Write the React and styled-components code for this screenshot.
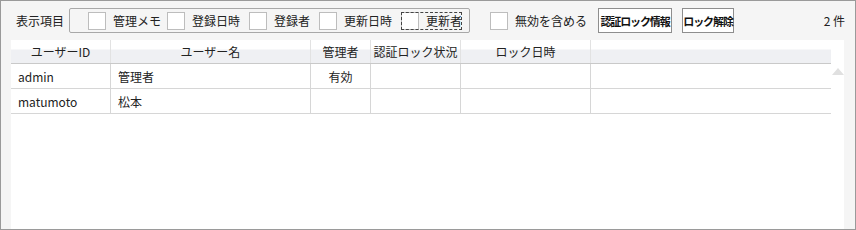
import React from "react";
import styled, { createGlobalStyle } from "styled-components";

const GlobalStyle = createGlobalStyle`
  html, body {
    margin: 0;
    padding: 0;
    background: #fff;
  }
  body {
    font-family: "Noto Sans CJK JP", "Noto Sans", sans-serif;
    font-size: 12px;
    color: #222;
  }
`;

const Frame = styled.div`
  width: 856px;
  height: 230px;
  box-sizing: border-box;
  border: 1px solid #9a9a9a;
  background: #f5f5f5;
  display: flex;
  flex-direction: column;
`;

const Toolbar = styled.div`
  height: 39px;
  display: flex;
  align-items: center;
  padding: 0 10px 0 15px;
  box-sizing: border-box;
  white-space: nowrap;
`;

const Caption = styled.span`
  margin-right: 5px;
  line-height: 16px;
`;

const GroupBox = styled.div`
  width: 401px;
  height: 25px;
  box-sizing: border-box;
  border: 1px solid #a8a8a8;
  border-radius: 2px;
  display: flex;
  align-items: center;
  padding-left: 18px;
  margin-right: 20px;
`;

const CheckItem = styled.label`
  display: flex;
  align-items: center;
  gap: 7px;
  width: ${(p) => (p.$width ? `${p.$width}px` : "auto")};
  height: 18px;
  padding-right: 1px;
  box-sizing: border-box;
  white-space: nowrap;
  outline: ${(p) => (p.$focused ? "1px dashed #444" : "none")};
  outline-offset: -1px;
  flex: none;
`;

const Box = styled.span`
  width: 18px;
  height: 18px;
  box-sizing: border-box;
  border: 1px solid #bdbdbd;
  background: #fff;
  flex: none;
`;

const Button = styled.button`
  width: ${(p) => p.$width}px;
  height: 25px;
  box-sizing: border-box;
  border: 1px solid #8e8e8e;
  background: #fff;
  font-family: "Noto Sans CJK JP", sans-serif;
  font-size: 11px;
  font-weight: bold;
  letter-spacing: -1.1px;
  color: #111;
  padding: 0;
  white-space: nowrap;
  margin-left: ${(p) => p.$gap}px;
  flex: none;
`;

const Count = styled.span`
  margin-left: auto;
`;

const Grid = styled.div`
  flex: 1;
  margin: 0 11px 0 10px;
  background: #fff;
  display: flex;
`;

const Table = styled.div`
  width: 820px;
  display: flex;
  flex-direction: column;
`;

const Row = styled.div`
  display: grid;
  grid-template-columns: 100px 200px 60px 90px 130px 1fr;
  height: ${(p) => (p.$head ? 24 : 25)}px;
  box-sizing: border-box;
  border-bottom: 1px solid ${(p) => (p.$head ? "#c9c9c9" : "#d6d6d6")};
  background: ${(p) =>
    p.$head ? "linear-gradient(#ffffff 0, #ffffff 9px, #eff0f3 10px, #eff0f3 100%)" : "#fff"};
`;

const Cell = styled.div`
  display: flex;
  align-items: center;
  justify-content: ${(p) => (p.$center ? "center" : "flex-start")};
  padding-left: ${(p) => (p.$center ? 0 : 7)}px;
  border-right: 1px solid ${(p) => (p.$head ? "#e2e2e2" : "#d6d6d6")};
  white-space: nowrap;
  &:last-child {
    border-right: none;
  }
`;

const ScrollBar = styled.div`
  flex: 1;
  display: flex;
  justify-content: center;
  padding-top: 28px;
`;

const columns = ["ユーザーID", "ユーザー名", "管理者", "認証ロック状況", "ロック日時", ""];

const rows = [
  { id: "admin", name: "管理者", admin: "有効" },
  { id: "matumoto", name: "松本", admin: "" },
];

const options = [
  { label: "管理メモ", width: 79 },
  { label: "登録日時", width: 82 },
  { label: "登録者", width: 70 },
  { label: "更新日時", width: 82 },
  { label: "更新者", width: 61, focused: true },
];

export default function App() {
  return (
    <>
      <GlobalStyle />
      <Frame>
        <Toolbar>
          <Caption>表示項目</Caption>
          <GroupBox>
            {options.map((o) => (
              <CheckItem key={o.label} $width={o.width} $focused={o.focused}>
                <Box />
                {o.label}
              </CheckItem>
            ))}
          </GroupBox>
          <CheckItem>
            <Box />
            無効を含める
          </CheckItem>
          <Button $width={74} $gap={10}>認証ロック情報</Button>
          <Button $width={52} $gap={10}>ロック解除</Button>
          <Count>2 件</Count>
        </Toolbar>
        <Grid>
          <Table>
            <Row $head>
              {columns.map((c, i) => (
                <Cell key={i} $head $center>
                  {c}
                </Cell>
              ))}
            </Row>
            {rows.map((r) => (
              <Row key={r.id}>
                <Cell>{r.id}</Cell>
                <Cell>{r.name}</Cell>
                <Cell $center>{r.admin}</Cell>
                <Cell />
                <Cell />
                <Cell />
              </Row>
            ))}
          </Table>
          <ScrollBar>
            <svg width="12" height="7" viewBox="0 0 12 7">
              <polygon points="0,7 6,0 12,7" fill="#e0e0e0" />
            </svg>
          </ScrollBar>
        </Grid>
      </Frame>
    </>
  );
}
